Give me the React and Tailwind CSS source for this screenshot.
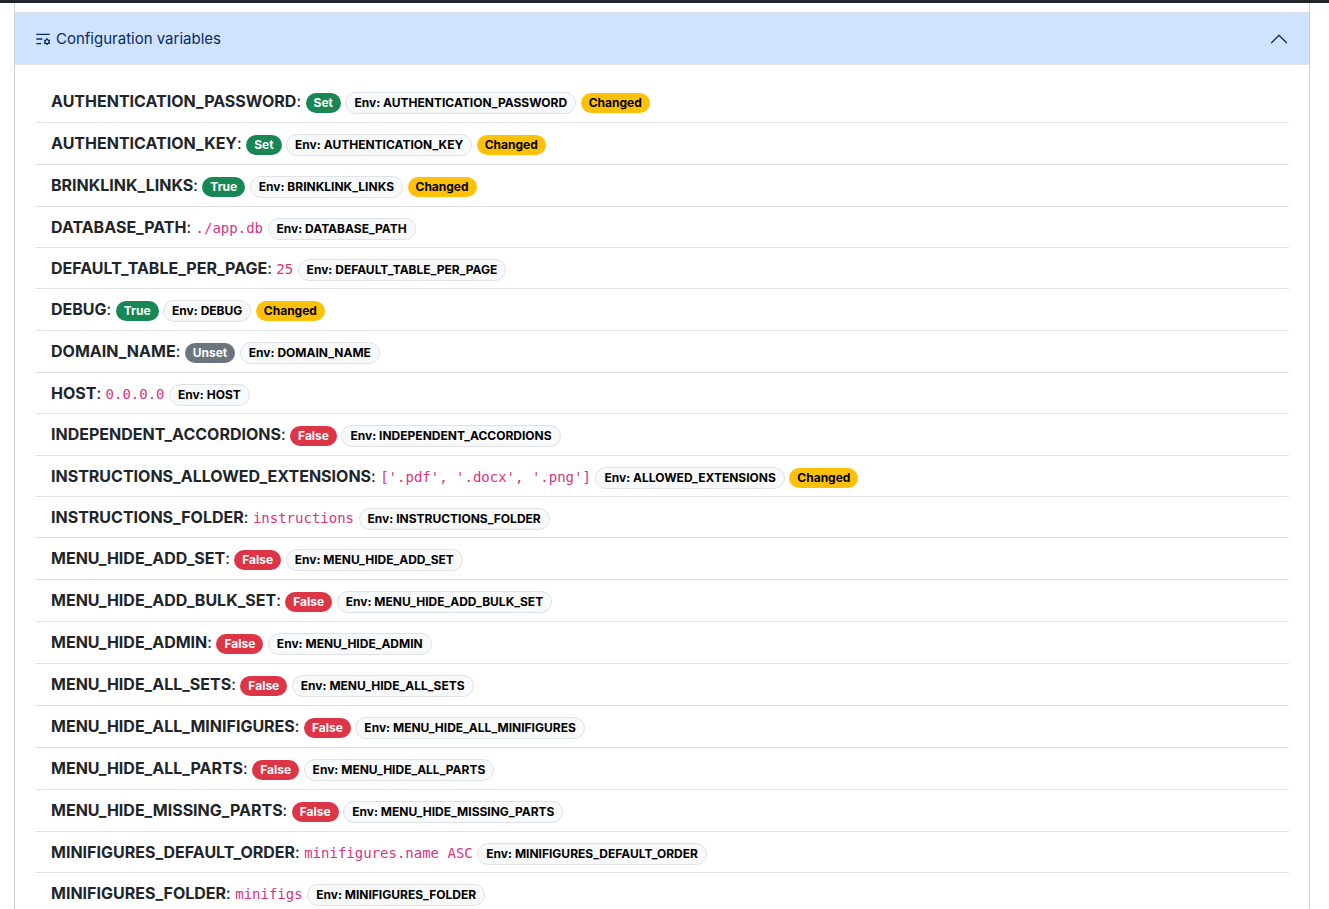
import React, { useState } from 'react';
import { RiListSettingsLine } from 'react-icons/ri';

const variables = [
  { name: 'AUTHENTICATION_PASSWORD', status: 'Set', changed: true },
  { name: 'AUTHENTICATION_KEY', status: 'Set', changed: true },
  { name: 'BRINKLINK_LINKS', status: 'True', changed: true },
  { name: 'DATABASE_PATH', value: './app.db' },
  { name: 'DEFAULT_TABLE_PER_PAGE', value: '25' },
  { name: 'DEBUG', status: 'True', changed: true },
  { name: 'DOMAIN_NAME', status: 'Unset' },
  { name: 'HOST', value: '0.0.0.0' },
  { name: 'INDEPENDENT_ACCORDIONS', status: 'False' },
  {
    name: 'INSTRUCTIONS_ALLOWED_EXTENSIONS',
    value: "['.pdf', '.docx', '.png']",
    env: 'ALLOWED_EXTENSIONS',
    changed: true,
  },
  { name: 'INSTRUCTIONS_FOLDER', value: 'instructions' },
  { name: 'MENU_HIDE_ADD_SET', status: 'False' },
  { name: 'MENU_HIDE_ADD_BULK_SET', status: 'False' },
  { name: 'MENU_HIDE_ADMIN', status: 'False' },
  { name: 'MENU_HIDE_ALL_SETS', status: 'False' },
  { name: 'MENU_HIDE_ALL_MINIFIGURES', status: 'False' },
  { name: 'MENU_HIDE_ALL_PARTS', status: 'False' },
  { name: 'MENU_HIDE_MISSING_PARTS', status: 'False' },
  { name: 'MINIFIGURES_DEFAULT_ORDER', value: 'minifigures.name ASC' },
  { name: 'MINIFIGURES_FOLDER', value: 'minifigs' },
];

const badgeColors = {
  Set: 'bg-[#198754] text-white',
  True: 'bg-[#198754] text-white',
  False: 'bg-[#dc3545] text-white',
  Unset: 'bg-[#6c757d] text-white',
  env: 'bg-[#f8f9fa] text-black border border-[#dee2e6]',
  changed: 'bg-[#ffc107] text-black',
};

function Badge({ color, children }) {
  return (
    <span
      className={`inline-block rounded-full px-2 py-1 text-xs leading-none font-bold whitespace-nowrap ${badgeColors[color]}`}
    >
      {children}
    </span>
  );
}

function VariableRow({ name, status, value, env = name, changed }) {
  return (
    <li className={`px-4 border-b border-[#dee2e6] last:border-b-0 ${value ? 'pt-2 pb-[7px]' : 'py-2'}`}>
      <strong className="font-bold">{name}</strong>:{' '}
      {status && <Badge color={status}>{status}</Badge>}
      {value && (
        <code className="font-['DejaVu_Sans_Mono',monospace] text-sm leading-5 text-[#d63384]">{value}</code>
      )}{' '}
      <Badge color="env">Env: {env}</Badge>{' '}
      {changed && <Badge color="changed">Changed</Badge>}
    </li>
  );
}

function App() {
  const [open, setOpen] = useState(true);

  return (
    <div className="h-screen overflow-hidden bg-white font-['Inter',sans-serif] text-base text-[#212529]">
      {/* Navbar edge */}
      <div className="h-[3px] bg-[#212529]" />

      <main className="ml-[14px] mr-[19px] border-x border-[#d0d1d2] pt-[9px]">
        {/* Accordion header */}
        <h2 className="border-y border-[#dee2e6]">
          <button
            type="button"
            aria-expanded={open}
            aria-controls="configuration-variables"
            onClick={() => setOpen(!open)}
            className="flex w-full items-center bg-[#cfe2ff] px-5 pt-[14px] pb-[13px] text-left text-[15px] leading-6 text-[#052c65] cursor-pointer"
          >
            <RiListSettingsLine className="mr-[5px]" size={16} />
            Configuration variables
            <svg
              className={`ml-auto ${open ? 'rotate-180' : ''}`}
              width="20"
              height="20"
              viewBox="0 0 16 16"
              fill="none"
              stroke="currentColor"
              strokeLinecap="round"
              strokeLinejoin="round"
            >
              <path d="m2 5 6 6 6-6" />
            </svg>
          </button>
        </h2>

        {/* Accordion body */}
        {open && (
          <ul id="configuration-variables" className="px-5 py-4">
            {variables.map((variable) => (
              <VariableRow key={variable.name} {...variable} />
            ))}
          </ul>
        )}
      </main>
    </div>
  );
}

export default App;
